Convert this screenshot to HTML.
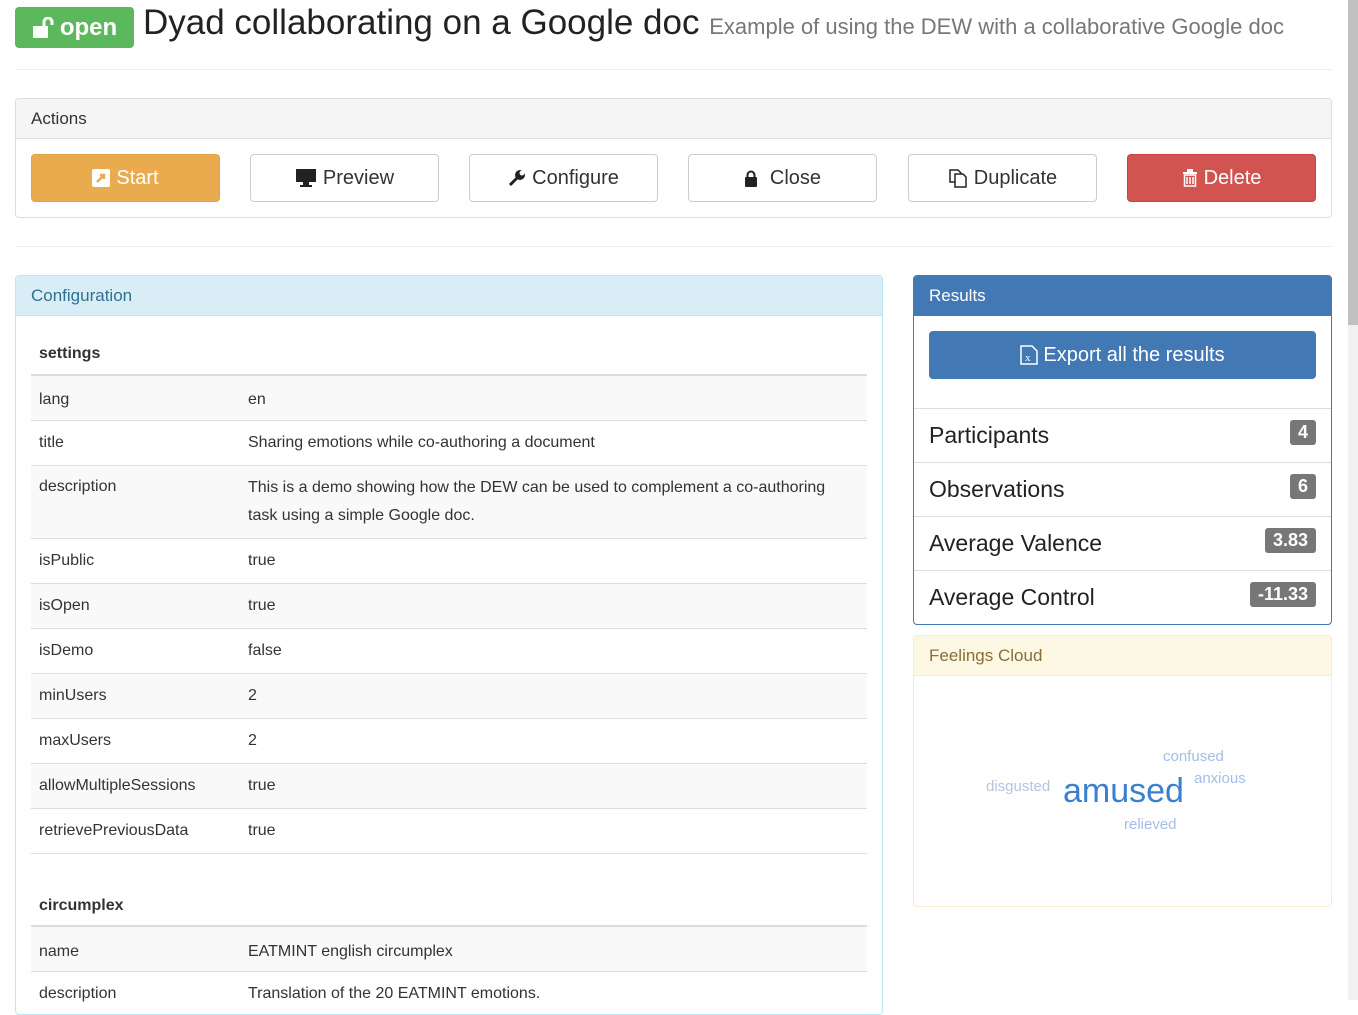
<!DOCTYPE html>
<html><head><meta charset="utf-8"><style>
*{box-sizing:border-box;margin:0;padding:0}
body{width:1358px;height:1000px;overflow:hidden;background:#fff;font-family:"Liberation Sans",sans-serif;color:#333;position:relative}
.a{position:absolute}
.sb{position:absolute;left:1348px;top:0;width:10px;height:1000px;background:#f1f1f1}
.sb div{width:10px;height:325px;background:#c1c1c1}
.hr{position:absolute;left:15px;width:1317px;height:1px;background:#eee}
.btn{position:absolute;top:154px;width:189px;height:48px;border:1px solid #ccc;border-radius:4px;font-size:20px;display:flex;align-items:center;justify-content:center;gap:6px;color:#333;background:#fff}
.panel{position:absolute;border:1px solid #ddd;border-radius:4px;overflow:hidden}
.ph{height:40px;line-height:40px;padding-left:15px;font-size:17px;border-bottom:1px solid #ddd}
table{border-collapse:collapse;width:836px;font-size:16px}
td{padding:0 8px;height:45px;border-top:1px solid #ddd;vertical-align:middle}
tr.s td{background:#f9f9f9}
.k{width:209px}
.li{height:54px;border-top:1px solid #ddd;display:flex;align-items:center;justify-content:space-between;padding:0 15px;font-size:23px;color:#222}
.bd{background:#777;color:#fff;font-weight:bold;font-size:18px;border-radius:3px;padding:2px 8px;margin-top:-7px}
</style></head><body>
<div class="a" style="left:15px;top:7px;width:119px;height:41px;background:#5cb85c;border-radius:4px;color:#fff;font-weight:bold;font-size:24px;display:flex;align-items:center;justify-content:center;gap:4px">
<svg width="24" height="22" viewBox="0 0 24 22"><rect x="1" y="9" width="15" height="12" fill="#fff"/><path d="M12 9V5a4 4 0 0 1 8 0v3" stroke="#fff" stroke-width="3" fill="none"/></svg>open</div>
<div class="a" style="left:143px;top:3px;font-size:35px;color:#222;white-space:nowrap">Dyad collaborating on a Google doc <span style="font-size:22px;color:#777">Example of using the DEW with a collaborative Google doc</span></div>
<div class="hr" style="top:69px"></div>
<div class="panel" style="left:15px;top:98px;width:1317px;height:120px"><div class="ph" style="background:#f5f5f5;color:#333">Actions</div></div>
<div class="btn" style="left:31px;background:#eaab4f;border-color:#e5a240;color:#fff"><svg width="18" height="18"><rect width="18" height="18" rx="2" fill="#fff"/><path d="M5 13L12 6M8 6h4v4" stroke="#eaab4f" stroke-width="2.5" fill="none"/></svg>Start</div>
<div class="btn" style="left:250px"><svg width="22" height="20"><rect x="1" y="1" width="20" height="13" fill="#222"/><rect x="8" y="14" width="6" height="4" fill="#222"/><rect x="5" y="17" width="12" height="2" fill="#222"/></svg>Preview</div>
<div class="btn" style="left:469px"><svg width="18" height="18"><path d="M2 16L10 8" stroke="#222" stroke-width="3"/><circle cx="12" cy="6" r="5" fill="#222"/><circle cx="14" cy="4" r="2.5" fill="#fff"/></svg>Configure</div>
<div class="btn" style="left:688px;gap:12px"><svg width="14" height="17"><rect x="1" y="7" width="12" height="10" rx="1" fill="#222"/><path d="M3.5 7V5a3.5 3.5 0 0 1 7 0v2" stroke="#222" stroke-width="2" fill="none"/></svg>Close</div>
<div class="btn" style="left:908px"><svg width="20" height="20"><path d="M2 2h8l3 3v9H2z" fill="#fff" stroke="#222" stroke-width="1.5"/><path d="M7 6h8l3 3v10H7z" fill="#fff" stroke="#222" stroke-width="1.5"/></svg>Duplicate</div>
<div class="btn" style="left:1127px;background:#d15450;border-color:#c9423e;color:#fff"><svg width="16" height="18"><rect x="1" y="3" width="14" height="2" fill="#fff"/><rect x="5" y="0" width="6" height="3" fill="#fff"/><path d="M2.5 6h11v11h-11z M5 8v7 M8 8v7 M11 8v7" stroke="#fff" stroke-width="1.5" fill="none"/></svg>Delete</div>
<div class="hr" style="top:246px"></div>
<div class="panel" style="left:15px;top:275px;width:868px;height:740px;border-color:#bce8f1">
<div class="ph" style="background:#d9edf7;color:#31708f;border-color:#bce8f1">Configuration</div>
<div style="padding:15px 15px">
<table>
<tr><td colspan="2" style="border:0;font-weight:bold;height:44px;padding-top:2px">settings</td></tr>
<tr class="s"><td class="k" style="border-top:2px solid #ddd;padding-top:4px">lang</td><td style="border-top:2px solid #ddd;padding-top:4px">en</td></tr>
<tr><td class="k">title</td><td>Sharing emotions while co-authoring a document</td></tr>
<tr class="s"><td class="k" style="vertical-align:top;padding-top:12px;height:73px">description</td><td style="line-height:28px;padding-right:24px">This is a demo showing how the DEW can be used to complement a co-authoring task using a simple Google doc.</td></tr>
<tr><td class="k">isPublic</td><td>true</td></tr>
<tr class="s"><td class="k">isOpen</td><td>true</td></tr>
<tr><td class="k">isDemo</td><td>false</td></tr>
<tr class="s"><td class="k">minUsers</td><td>2</td></tr>
<tr><td class="k">maxUsers</td><td>2</td></tr>
<tr class="s"><td class="k">allowMultipleSessions</td><td>true</td></tr>
<tr><td class="k">retrievePreviousData</td><td>true</td></tr>
<tr><td colspan="2" style="border-top:1px solid #ddd;border-bottom:0;height:28px"></td></tr>
<tr><td colspan="2" style="border:0;font-weight:bold;height:45px;padding-top:6px">circumplex</td></tr>
<tr class="s"><td class="k" style="border-top:2px solid #ddd;padding-top:6px">name</td><td style="border-top:2px solid #ddd;padding-top:6px">EATMINT english circumplex</td></tr>
<tr><td class="k">description</td><td>Translation of the 20 EATMINT emotions.</td></tr>
</table></div></div>
<div class="panel" style="left:913px;top:275px;width:419px;height:350px;border-color:#4279b4">
<div class="ph" style="background:#4279b4;color:#fff;border-color:#4279b4">Results</div>
<div style="padding:15px 15px 29px"><div style="height:48px;background:#4279b4;border-radius:4px;color:#fff;font-size:20px;display:flex;align-items:center;justify-content:center;gap:5px"><svg width="18" height="20"><path d="M1 1h11l5 5v13H1z" fill="none" stroke="#fff" stroke-width="1.5"/><text x="5" y="16" font-size="11" fill="#fff" font-family="Liberation Serif">x</text></svg>Export all the results</div></div>
<div class="li">Participants<span class="bd">4</span></div>
<div class="li">Observations<span class="bd">6</span></div>
<div class="li">Average Valence<span class="bd">3.83</span></div>
<div class="li">Average Control<span class="bd">-11.33</span></div>
</div>
<div class="panel" style="left:913px;top:635px;width:419px;height:272px;border-color:#faebcc">
<div class="ph" style="background:#fcf8e3;color:#8a6d3b;border-color:#faebcc">Feelings Cloud</div>
<div class="a" style="left:249px;top:112px;font-size:15px;color:#a5bde6">confused</div>
<div class="a" style="left:280px;top:134px;font-size:15px;color:#a5bde6">anxious</div>
<div class="a" style="left:72px;top:142px;font-size:15px;color:#b5c3e3">disgusted</div>
<div class="a" style="left:149px;top:136px;font-size:34px;color:#3a7fd0">amused</div>
<div class="a" style="left:210px;top:180px;font-size:15px;color:#a5bde6">relieved</div>
</div>
<div class="sb"><div></div></div>
</body></html>
